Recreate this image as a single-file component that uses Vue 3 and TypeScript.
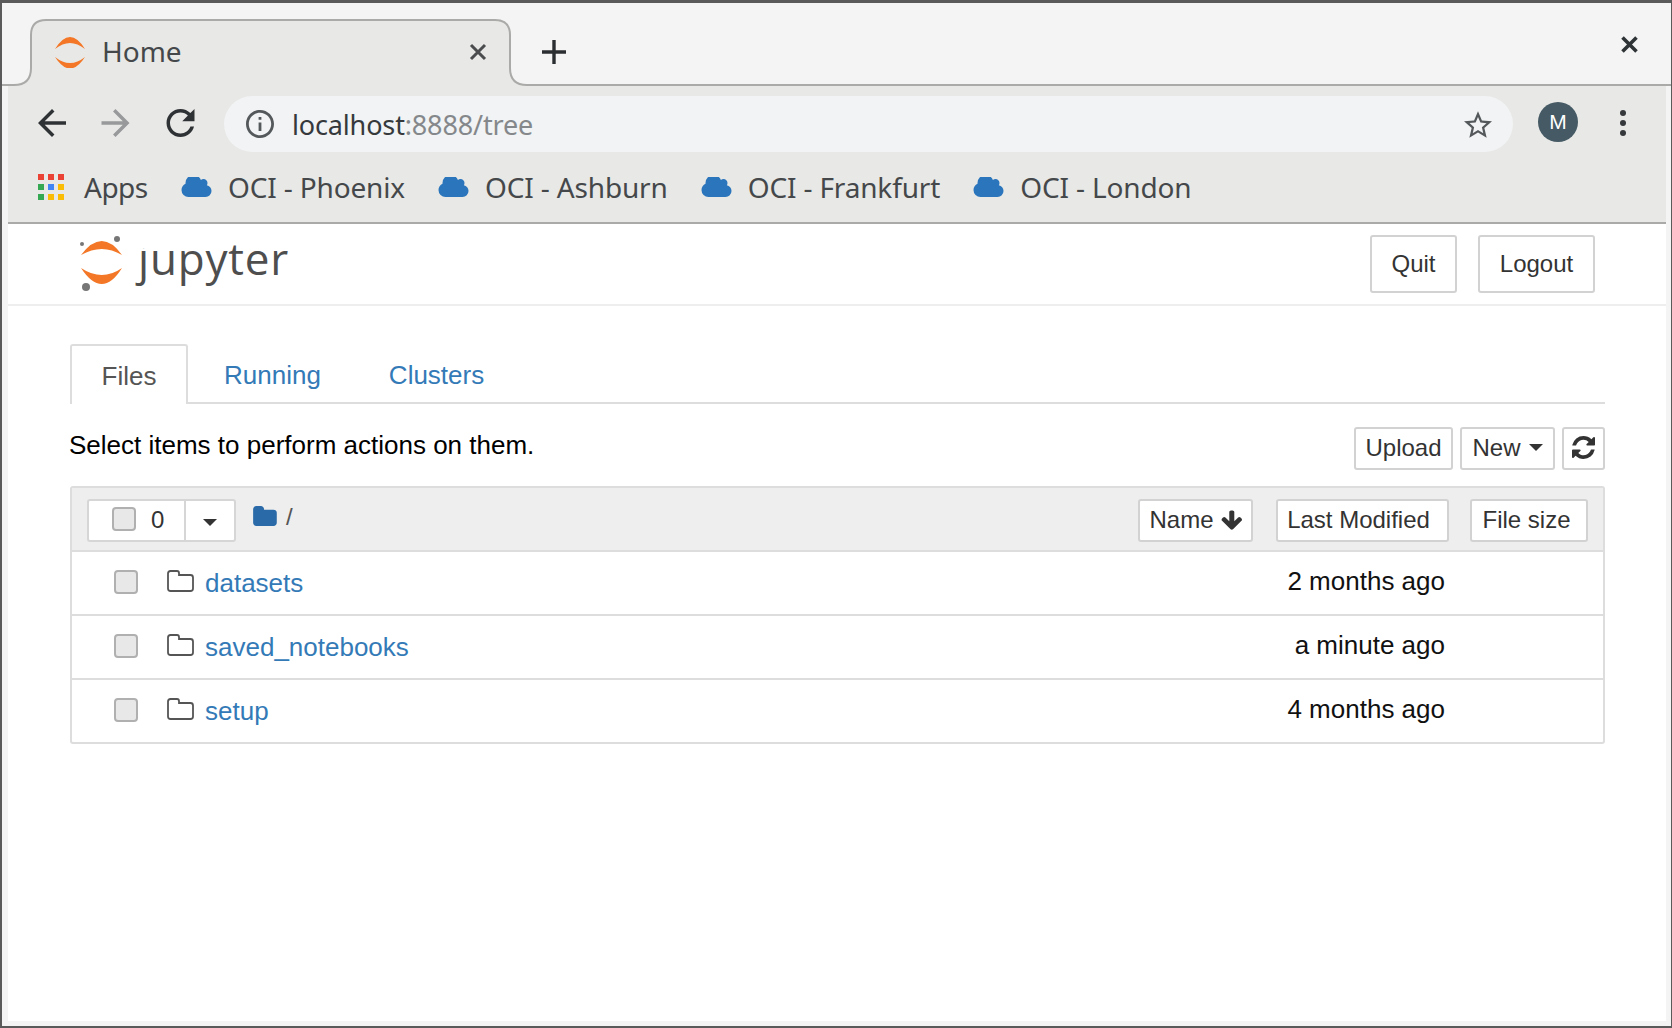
<script setup lang="ts">
interface Item {
  name: string
  modified: string
}

const bookmarks: string[] = ['OCI - Phoenix', 'OCI - Ashburn', 'OCI - Frankfurt', 'OCI - London']

const items: Item[] = [
  { name: 'datasets', modified: '2 months ago' },
  { name: 'saved_notebooks', modified: 'a minute ago' },
  { name: 'setup', modified: '4 months ago' },
]

const appColors: string[] = [
  '#ea4335', '#ea4335', '#ea4335',
  '#34a853', '#4285f4', '#fbbc05',
  '#34a853', '#fbbc05', '#fbbc05',
]
</script>

<template>
  <div class="window">
    <div class="titlebar">
      <div class="tab">
        <svg class="tab-shape" width="540" height="68" viewBox="0 17 540 68">
          <path
            d="M0 84H14Q31 84 31 67V34Q31 19 46 19H495Q510 19 510 34V67Q510 84 527 84H540V86H0Z"
            fill="#e8e8e6"
          />
          <path
            d="M0 84H14Q31 84 31 67V34Q31 19 46 19H495Q510 19 510 34V67Q510 84 527 84H540"
            fill="none"
            stroke="#aaaaa8"
            stroke-width="2"
          />
        </svg>
        <svg class="favicon" width="30" height="32" viewBox="55 36 30 32">
          <path d="M55 49Q70 25 85 49Q70 37 55 49Z" fill="#f37726" />
          <path d="M55 57Q70 80 85 57Q70 69 55 57Z" fill="#f37726" />
        </svg>
        <span class="tab-title">Home</span>
        <svg class="tab-close" width="18" height="18" viewBox="0 0 18 18">
          <path d="M2 2L16 16M16 2L2 16" stroke="#4a4c4e" stroke-width="3" />
        </svg>
      </div>
      <svg class="new-tab" width="24" height="24" viewBox="0 0 24 24">
        <path d="M12 0V24M0 12H24" stroke="#2b2e31" stroke-width="3.4" />
      </svg>
      <svg class="win-close" width="17" height="17" viewBox="0 0 17 17">
        <path d="M1.5 1.5L15.5 15.5M15.5 1.5L1.5 15.5" stroke="#2e3436" stroke-width="3.6" />
      </svg>
    </div>

    <div class="toolbar">
      <div class="nav">
        <svg class="nav-back" width="28" height="28" viewBox="4 4 16 16">
          <path d="M20 11H7.83l5.59-5.59L12 4l-8 8 8 8 1.41-1.41L7.83 13H20v-2z" fill="#2f3235" />
        </svg>
        <svg class="nav-forward" width="29" height="28" viewBox="4 4 16 16">
          <path d="M12 4l-1.41 1.41L16.17 11H4v2h12.17l-5.58 5.59L12 20l8-8z" fill="#97999b" />
        </svg>
        <svg class="nav-reload" width="29" height="28" viewBox="4 4 16 16">
          <path
            d="M17.65 6.35C16.2 4.9 14.21 4 12 4c-4.42 0-7.99 3.58-7.99 8s3.57 8 7.99 8c3.73 0 6.84-2.55 7.73-6h-2.08c-.82 2.33-3.04 4-5.65 4-3.31 0-6-2.69-6-6s2.69-6 6-6c1.66 0 3.14.69 4.22 1.78L13 11h7V4l-2.35 2.35z"
            fill="#2f3235"
          />
        </svg>
        <div class="omnibox">
          <svg width="28" height="28" viewBox="2 2 20 20">
            <path
              d="M11 7h2v2h-2zm0 4h2v6h-2zm1-9C6.48 2 2 6.48 2 12s4.48 10 10 10 10-4.48 10-10S17.52 2 12 2zm0 18c-4.41 0-8-3.59-8-8s3.59-8 8-8 8 3.59 8 8-3.59 8-8 8z"
              fill="#55585b"
            />
          </svg>
          <span class="url"><span class="url-host">localhost</span>:8888/tree</span>
          <svg class="star" width="28" height="27" viewBox="2 2 20 19">
            <path
              d="M22 9.24l-7.19-.62L12 2 9.19 8.63 2 9.24l5.46 4.73L5.82 21 12 17.27 18.18 21l-1.63-7.03L22 9.24zM12 15.4l-3.76 2.27 1-4.28-3.32-2.88 4.38-.38L12 6.1l1.71 4.04 4.38.38-3.32 2.88 1 4.28L12 15.4z"
              fill="#55585b"
            />
          </svg>
        </div>
        <div class="avatar">M</div>
        <div class="dots"><i></i><i></i><i></i></div>
      </div>
      <div class="bookmarks">
        <div class="apps-grid">
          <i v-for="(color, i) in appColors" :key="i" :style="{ background: color }"></i>
        </div>
        <span class="apps-label">Apps</span>
        <div v-for="mark in bookmarks" :key="mark" class="bookmark">
          <svg width="31" height="20" viewBox="0 256 1920 1280">
            <path
              d="M1920 1152q0 159-112.5 271.5t-271.5 112.5h-1088q-185 0-316.5-131.5t-131.5-316.5q0-132 71-241.5t187-163.5q-2-28-2-43 0-212 150-362t362-150q158 0 286.5 88t187.5 230q70-62 166-62 106 0 181 75t75 181q0 75-41 138 129 30 213 134.5t84 239.5z"
              fill="#2a75bb"
            />
          </svg>
          <span>{{ mark }}</span>
        </div>
      </div>
    </div>

    <div class="page">
      <header class="page-header">
        <div class="logo">
          <svg width="44" height="56" viewBox="80 235 44 56">
            <path d="M81 255Q102 227 122 255Q102 243 81 255Z" fill="#f37726" />
            <path d="M81 268Q102 300 122 268Q102 282 81 268Z" fill="#f37726" />
            <circle cx="82" cy="244" r="2" fill="#767677" />
            <circle cx="117" cy="239" r="3" fill="#767677" />
            <circle cx="86" cy="287" r="4" fill="#767677" />
          </svg>
          <span class="wordmark"><span class="wordmark-j">j</span>upyter</span>
        </div>
        <div class="header-actions">
          <button class="btn btn-header">Quit</button>
          <button class="btn btn-header">Logout</button>
        </div>
      </header>

      <main class="content">
        <nav class="tabs">
          <a class="tab-link active">Files</a>
          <a class="tab-link running">Running</a>
          <a class="tab-link clusters">Clusters</a>
        </nav>

        <div class="actions">
          <span class="hint">Select items to perform actions on them.</span>
          <div class="action-buttons">
            <button class="btn btn-upload">Upload</button>
            <button class="btn btn-new">New <i class="caret"></i></button>
            <button class="btn btn-refresh">
              <svg width="23" height="23" viewBox="0 0 1536 1536">
                <path
                  d="M1511 928q0 5-1 7-64 268-268 434.5t-478 166.5q-146 0-282.5-55t-243.5-157l-129 129q-19 19-45 19t-45-19-19-45v-448q0-26 19-45t45-19h448q26 0 45 19t19 45-19 45l-137 137q71 66 161 102t187 36q134 0 250-65t186-179q11-17 53-117 8-23 30-23h192q13 0 22.5 9.5t9.5 22.5zm25-800v448q0 26-19 45t-45 19h-448q-26 0-45-19t-19-45 19-45l138-138q-148-137-349-137-134 0-250 65t-186 179q-11 17-53 117-8 23-30 23h-199q-13 0-22.5-9.5t-9.5-22.5v-7q65-268 270-434.5t480-166.5q146 0 284 55.5t245 156.5l130-129q19-19 45-19t45 19 19 45z"
                  fill="#333"
                />
              </svg>
            </button>
          </div>
        </div>

        <section class="list">
          <div class="list-head">
            <div class="select-group">
              <div class="select-main">
                <input class="check" type="checkbox" />
                <span class="count">0</span>
              </div>
              <div class="select-caret"><i class="caret"></i></div>
            </div>
            <svg class="crumb-folder" width="25" height="20" viewBox="0 128 1728 1408">
              <path
                d="M1728 608v704q0 92-66 158t-158 66h-1216q-92 0-158-66t-66-158v-960q0-92 66-158t158-66h320q92 0 158 66t66 158v32h672q92 0 158 66t66 158z"
                fill="#2a6aa8"
              />
            </svg>
            <span class="crumb-slash">/</span>
            <div class="sort-buttons">
              <button class="btn btn-name">
                Name
                <svg width="22" height="20" viewBox="60 100 1680 1520">
                  <path
                    d="M1675 832q0 53-37 90l-651 652q-39 37-91 37-53 0-90-37l-651-652q-38-36-38-90 0-53 38-91l74-75q39-37 91-37 53 0 90 37l294 294v-704q0-52 38-90t90-38h128q52 0 90 38t38 90v704l294-294q37-37 90-37 52 0 91 37l75 75q37 39 37 91z"
                    fill="#333"
                    transform="translate(64 0)"
                  />
                </svg>
              </button>
              <button class="btn btn-modified">Last Modified</button>
              <button class="btn btn-size">File size</button>
            </div>
          </div>
          <div v-for="item in items" :key="item.name" class="row">
            <input class="check" type="checkbox" />
            <svg class="row-folder" width="27" height="22" viewBox="0 0 27 22">
              <path
                d="M3.5 1H10Q12 1 12 3V5H23.5Q26 5 26 7.5V18.5Q26 21 23.5 21H3.5Q1 21 1 18.5V3.5Q1 1 3.5 1Z"
                fill="none"
                stroke="#555"
                stroke-width="1.8"
              />
            </svg>
            <a class="row-name">{{ item.name }}</a>
            <span class="row-time">{{ item.modified }}</span>
          </div>
        </section>
      </main>
    </div>
  </div>
</template>

<style>
html,
body {
  margin: 0;
  background: #fff;
}
</style>

<style scoped>
.window {
  box-sizing: border-box;
  width: 1672px;
  height: 1028px;
  display: flex;
  flex-direction: column;
  background: #f4f4f4;
  border-top: 3px solid #5a5a5a;
  border-left: 2px solid #5a5a5a;
  border-right: 1px solid #5a5a5a;
  border-bottom: 2px solid #5a5a5a;
  overflow: hidden;
  font-family: "Liberation Sans", Arial, sans-serif;
}

.titlebar {
  position: relative;
  flex: none;
  display: flex;
  align-items: center;
  border-bottom: 2px solid #aaaaa8;
  box-sizing: border-box;
  height: 83px;
}

.tab {
  position: relative;
  width: 540px;
  height: 68px;
  flex: none;
  align-self: flex-end;
  margin-left: -2px;
  margin-bottom: -2px;
  display: flex;
  align-items: center;
  font-family: "Noto Sans", sans-serif;
}

.tab-shape {
  position: absolute;
  left: 0;
  top: 0;
}

.favicon {
  position: relative;
  margin-left: 55px;
}

.tab-title {
  position: relative;
  margin-left: 17px;
  margin-top: -2px;
  font-size: 28px;
  color: #45484b;
}

.tab-close {
  position: relative;
  margin-left: 287px;
}

.new-tab {
  margin-left: 2px;
  margin-top: 17px;
}

.win-close {
  margin-left: auto;
  margin-right: 33px;
  margin-top: 1px;
}

.toolbar {
  flex: none;
  height: 138px;
  margin: 0 5px 0 6px;
  box-sizing: border-box;
  background: #e8e8e6;
  border-bottom: 2px solid #aaaaa8;
  display: flex;
  flex-direction: column;
}

.nav {
  height: 74px;
  flex: none;
  display: flex;
  align-items: center;
  padding-left: 30px;
}

.nav-forward {
  margin-left: 35px;
}

.nav-reload {
  margin-left: 36px;
}

.omnibox {
  margin-left: 29px;
  width: 1289px;
  height: 56px;
  margin-top: 2px;
  box-sizing: border-box;
  padding: 0 21px 0 22px;
  border-radius: 28px;
  background: #f1f3f4;
  display: flex;
  align-items: center;
}

.url {
  margin-left: 18px;
  font-family: "Noto Sans", sans-serif;
  font-size: 27px;
  color: #85888b;
  letter-spacing: -0.15px;
}

.url-host {
  color: #36393c;
}

.star {
  margin-left: auto;
}

.avatar {
  margin-left: 25px;
  margin-top: -2px;
  width: 40px;
  height: 40px;
  border-radius: 50%;
  background: #455a64;
  color: #fff;
  font-size: 21px;
  line-height: 40px;
  text-align: center;
}

.dots {
  margin-left: 42px;
  display: flex;
  flex-direction: column;
  gap: 4px;
}

.dots i {
  display: block;
  width: 6px;
  height: 6px;
  border-radius: 50%;
  background: #36393c;
}

.bookmarks {
  display: flex;
  align-items: center;
  height: 54px;
  padding-left: 30px;
  font-family: "Noto Sans", sans-serif;
  font-size: 28px;
  letter-spacing: -0.15px;
  color: #45484b;
}

.apps-grid {
  display: grid;
  grid-template-columns: repeat(3, 6px);
  grid-auto-rows: 6px;
  gap: 4px;
}

.apps-grid i {
  display: block;
}

.apps-label {
  margin-left: 20px;
  width: 97px;
  letter-spacing: -0.5px;
}

.bookmark {
  display: flex;
  align-items: center;
  gap: 16px;
  margin-right: 33px;
}

.page {
  flex: 1;
  margin: 0 5px 5px 6px;
  background: #fff;
  display: flex;
  flex-direction: column;
}

.page-header {
  height: 82px;
  flex: none;
  box-sizing: border-box;
  border-bottom: 2px solid #eee;
  display: flex;
  align-items: flex-start;
  justify-content: space-between;
  padding: 11px 71px 0 72px;
}

.logo {
  display: flex;
  align-items: flex-start;
}

.wordmark {
  margin-left: 14px;
  margin-top: 1px;
  font-family: "Open Sans", sans-serif;
  font-size: 44px;
  line-height: 44px;
  letter-spacing: 0.8px;
  color: #4e4e4e;
}

.wordmark-j {
  display: inline-block;
  clip-path: inset(12px -6px -12px -12px);
}

.header-actions {
  display: flex;
  gap: 21px;
}

.btn {
  box-sizing: border-box;
  background: #fff;
  border: 2px solid #d2d2d2;
  border-radius: 3px;
  color: #333;
  font-family: "Liberation Sans", Arial, sans-serif;
  font-size: 24px;
  padding: 0;
  display: flex;
  align-items: center;
  justify-content: center;
}

.btn-header {
  height: 58px;
}

.btn-header:first-child {
  width: 87px;
}

.btn-header:last-child {
  width: 117px;
}

.content {
  margin: 38px 61px 0 62px;
}

.tabs {
  position: relative;
  display: flex;
  height: 60px;
  box-sizing: border-box;
  border-bottom: 2px solid #ddd;
}

.tab-link {
  font-size: 26px;
  line-height: 62px;
  color: #337ab7;
}

.tab-link.active {
  box-sizing: border-box;
  width: 118px;
  height: 60px;
  line-height: 60px;
  text-align: center;
  color: #555;
  background: #fff;
  border: 2px solid #ddd;
  border-bottom: none;
  border-radius: 3px 3px 0 0;
}

.tab-link.running {
  margin-left: 36px;
}

.tab-link.clusters {
  margin-left: 68px;
}

.actions {
  display: flex;
  justify-content: space-between;
  margin-top: 23px;
  height: 43px;
}

.hint {
  font-size: 26px;
  line-height: 36px;
  color: #000;
  margin-left: -1px;
}

.action-buttons {
  display: flex;
  gap: 7px;
}

.action-buttons .btn {
  height: 43px;
  padding-bottom: 2px;
}

.btn-upload {
  width: 99px;
}

.btn-new {
  width: 95px;
  gap: 8px;
}

.btn-refresh {
  width: 43px;
}

.caret {
  display: inline-block;
  width: 0;
  height: 0;
  border-top: 7px solid #333;
  border-left: 7px solid transparent;
  border-right: 7px solid transparent;
}

.list {
  margin-top: 16px;
  box-sizing: border-box;
  border: 2px solid #ddd;
  border-radius: 3px;
}

.list-head {
  height: 62px;
  box-sizing: border-box;
  background: #eee;
  display: flex;
  align-items: center;
  padding: 2px 15px 0 15px;
}

.select-group {
  display: flex;
  height: 43px;
  width: 149px;
  box-sizing: border-box;
  background: #fff;
  border: 2px solid #d6d6d6;
  border-radius: 3px;
}

.select-main {
  width: 97px;
  box-sizing: border-box;
  border-right: 2px solid #d6d6d6;
  display: flex;
  align-items: center;
  padding-left: 23px;
}

.select-main .check {
  margin-top: -2px;
}

.select-main .count {
  margin-left: 15px;
  font-size: 24px;
  color: #333;
}

.select-caret {
  flex: 1;
  display: flex;
  align-items: center;
  justify-content: center;
  padding-top: 4px;
}

.check {
  appearance: none;
  box-sizing: border-box;
  width: 24px;
  height: 24px;
  margin: 0;
  flex: none;
  background: #e8e8e8;
  border: 2px solid #b0b0b0;
  border-radius: 4px;
}

.crumb-folder {
  margin-left: 16px;
  margin-top: -8px;
}

.crumb-slash {
  margin-left: 9px;
  margin-top: -6px;
  font-size: 24px;
  color: #555;
}

.sort-buttons {
  margin-left: auto;
  display: flex;
  gap: 21px;
}

.sort-buttons .btn {
  height: 43px;
}

.btn-name {
  width: 115px;
  gap: 6px;
  margin-right: 2px;
}

.sort-buttons .btn-modified {
  width: 173px;
  padding-right: 8px;
}

.sort-buttons .btn-size {
  width: 118px;
  padding-right: 5px;
}

.row {
  height: 64px;
  box-sizing: border-box;
  border-top: 2px solid #ddd;
  display: flex;
  align-items: center;
  padding-left: 42px;
  font-size: 26px;
}

.row .check {
  margin-top: -2px;
}

.row-folder {
  margin-left: 29px;
  margin-top: -5px;
}

.row-name {
  margin-left: 11px;
  color: #337ab7;
}

.row-time {
  margin-left: auto;
  margin-right: 158px;
  margin-top: -3px;
  color: #111;
}
</style>
